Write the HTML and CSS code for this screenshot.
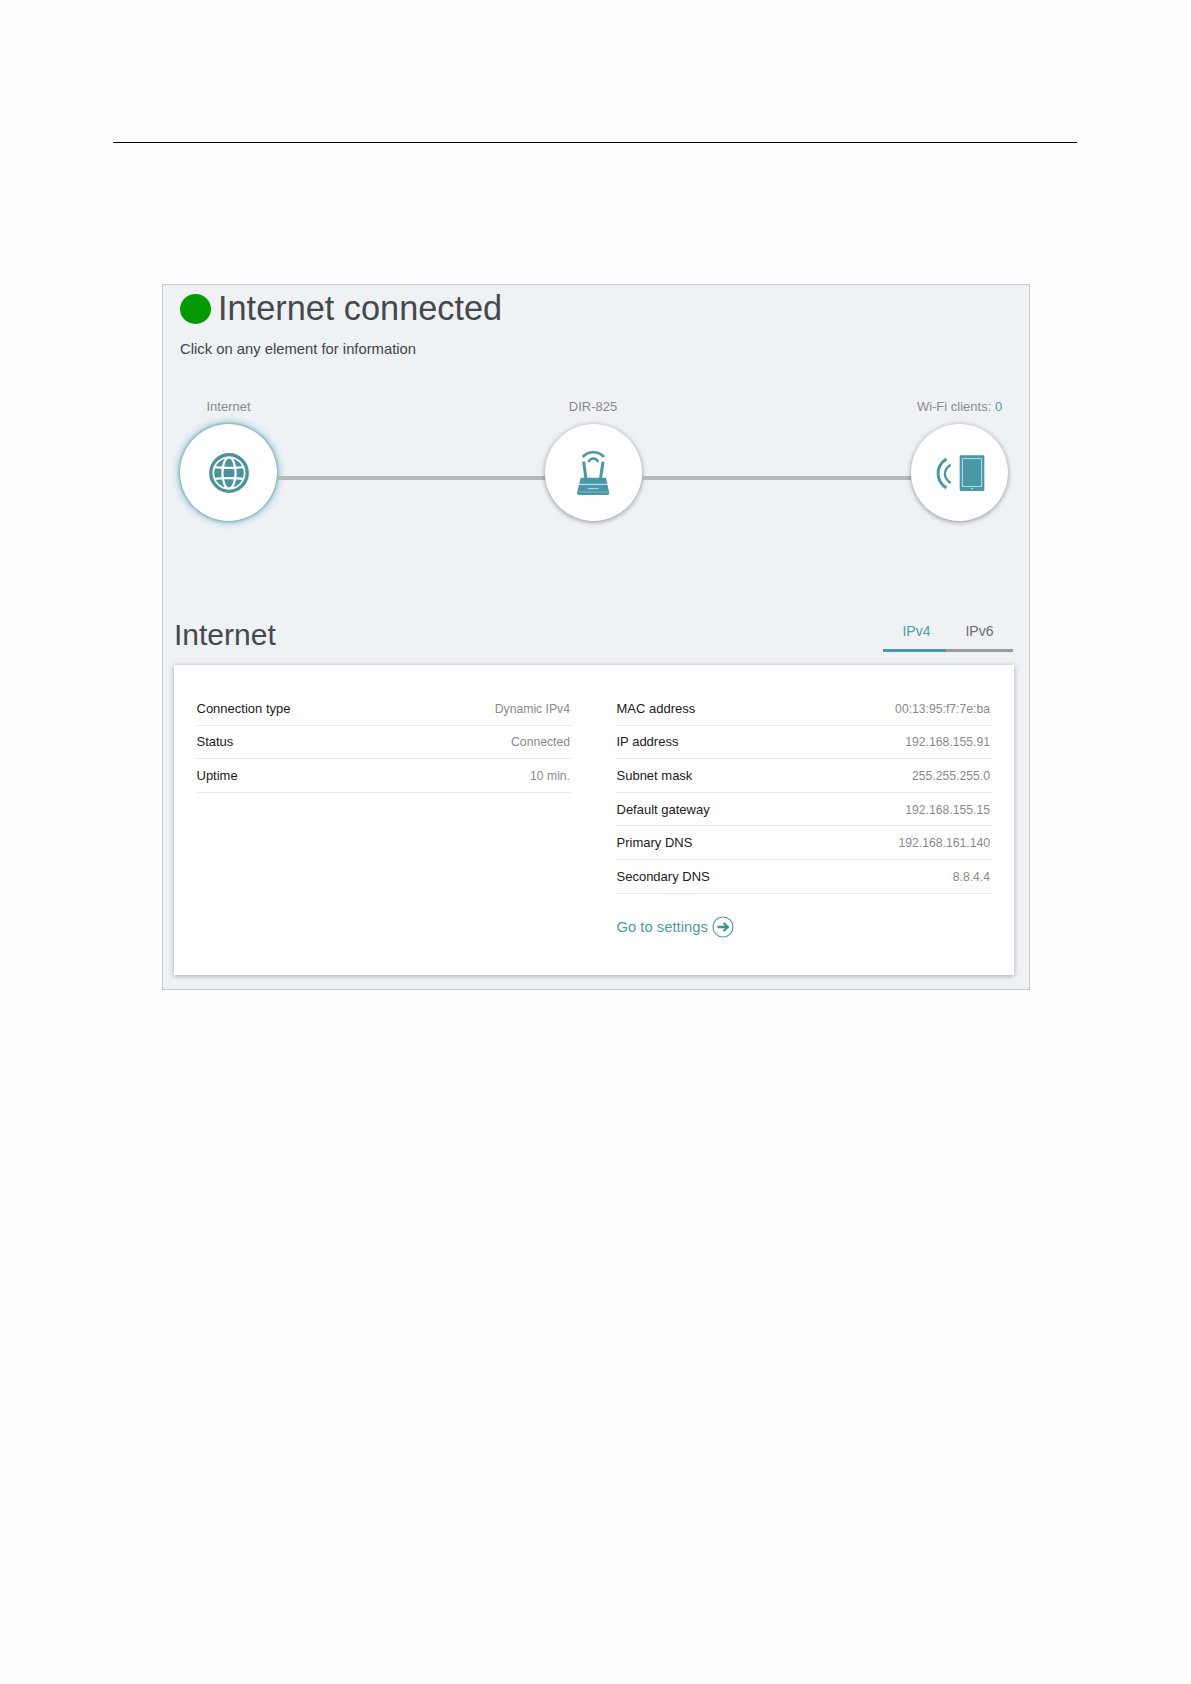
FILE: index.html
```html
<!DOCTYPE html>
<html lang="en">
<head>
<meta charset="utf-8">
<title>Internet connected</title>
<link rel="stylesheet" href="styles.css">
</head>
<body>
<hr class="rule">
<main class="panel">
  <div class="status">
    <span class="dot"></span>
    <h1 class="status-title">Internet connected</h1>
  </div>
  <p class="hint">Click on any element for information</p>
  <div class="diagram">
    <div class="node">
      <div class="node-label">Internet</div>
      <div class="node-circle node-active">
        <svg class="icon" width="40" height="40" viewBox="0 0 40 40">
          <circle cx="20" cy="20" r="18.2" fill="none" stroke="#4a929c" stroke-width="3.4"/>
          <circle cx="20" cy="20" r="14.8" fill="#4a929c"/>
          <g fill="none" stroke="#ffffff" stroke-width="2.2">
            <ellipse cx="20" cy="20" rx="6.6" ry="15.5"/>
            <path d="M6 14.2C11 15 29 15 34 14.2"/>
            <path d="M6 25.8C11 25 29 25 34 25.8"/>
          </g>
        </svg>
      </div>
    </div>
    <div class="link link-first"></div>
    <div class="node">
      <div class="node-label">DIR-825</div>
      <div class="node-circle">
        <svg class="icon icon-router" width="36" height="48" viewBox="105 90 108 144">
          <path d="M128 114C145 95 175 95 192 114" fill="none" stroke="#4a97a8" stroke-width="8"/>
          <path d="M145 129C153 115 167 115 175 129" fill="none" stroke="#4a97a8" stroke-width="7"/>
          <path d="M131 128L138 182M189 128L181 182" fill="none" stroke="#4a97a8" stroke-width="9"/>
          <path d="M122 176H198L208 222Q208 228 202 228H117Q111 228 111 222Z" fill="#4a97a8"/>
          <path d="M116 196H204" stroke="#ffffff" stroke-width="2.5"/>
          <path d="M145 209H176" stroke="#ffffff" stroke-width="3" stroke-dasharray="4 2"/>
          <path d="M114 219H206" stroke="#ffffff" stroke-width="1.5" opacity=".6"/>
        </svg>
      </div>
    </div>
    <div class="link"></div>
    <div class="node">
      <div class="node-label">Wi-Fi clients: <span class="accent">0</span></div>
      <div class="node-circle">
        <svg class="icon" width="50" height="40" viewBox="88 100 150 120">
          <path d="M122 118C89 140 89 182 122 205" fill="none" stroke="#4a97a8" stroke-width="9"/>
          <path d="M135 135C112 150 112 175 135 190" fill="none" stroke="#4a97a8" stroke-width="7"/>
          <rect x="162" y="107" width="74" height="107" rx="4" fill="#4a97a8"/>
          <rect x="170" y="117" width="58" height="83" fill="none" stroke="#d8ecf0" stroke-width="2.5"/>
          <circle cx="199" cy="207" r="2.4" fill="#d8ecf0"/>
        </svg>
      </div>
    </div>
  </div>
  <div class="section-head">
    <h2 class="section-title">Internet</h2>
    <div class="tabs">
      <div class="tab tab-active">IPv4</div>
      <div class="tab">IPv6</div>
    </div>
  </div>
  <section class="card">
    <div class="col">
      <div class="row"><span class="key">Connection type</span><span class="val">Dynamic IPv4</span></div>
      <div class="row"><span class="key">Status</span><span class="val">Connected</span></div>
      <div class="row"><span class="key">Uptime</span><span class="val">10 min.</span></div>
    </div>
    <div class="col">
      <div class="row"><span class="key">MAC address</span><span class="val">00:13:95:f7:7e:ba</span></div>
      <div class="row"><span class="key">IP address</span><span class="val">192.168.155.91</span></div>
      <div class="row"><span class="key">Subnet mask</span><span class="val">255.255.255.0</span></div>
      <div class="row"><span class="key">Default gateway</span><span class="val">192.168.155.15</span></div>
      <div class="row"><span class="key">Primary DNS</span><span class="val">192.168.161.140</span></div>
      <div class="row"><span class="key">Secondary DNS</span><span class="val">8.8.4.4</span></div>
      <a class="settings" href="#">Go to settings
        <svg width="22" height="22" viewBox="0 0 22 22">
          <circle cx="11" cy="11" r="10" fill="none" stroke="#4f9aa5" stroke-width="1.1"/>
          <path d="M5.5 11H15M11.5 7L15.8 11L11.5 15" fill="none" stroke="#3f8f9c" stroke-width="2.3"/>
        </svg>
      </a>
    </div>
  </section>
</main>
</body>
</html>
```

FILE: styles.css
```css
* { box-sizing: border-box; }

html, body {
  margin: 0;
  padding: 0;
  background: #fefefe;
}

body {
  font-family: "Liberation Sans", Arial, sans-serif;
  min-height: 1684px;
}

.rule {
  display: block;
  width: 964px;
  height: 1px;
  margin: 142px 0 0 113px;
  border: 0;
  background: #000000;
}

.panel {
  width: 868px;
  height: 706px;
  margin: 141px 0 0 162px;
  padding: 9px 15px 0 11px;
  background: #eef2f5;
  border: 1px solid #c9c9c9;
}

.status {
  display: flex;
  align-items: center;
  gap: 7px;
  height: 30px;
  margin-left: 6px;
}

.dot {
  width: 31px;
  height: 30px;
  border-radius: 50%;
  background: #049a04;
}

.status-title {
  margin: -2px 0 0;
  font-size: 34.3px;
  font-weight: 400;
  line-height: 30px;
  color: #45494d;
}

.hint {
  margin: 16px 0 0 6px;
  font-size: 14.8px;
  line-height: 18px;
  color: #444444;
}

.diagram {
  display: flex;
  align-items: flex-end;
  margin: 40px 6px 0 6px;
}

.node {
  flex: none;
  width: 97px;
}

.node-label {
  margin-bottom: 8px;
  font-size: 13px;
  line-height: 18px;
  color: #8a8a8a;
  text-align: center;
  white-space: nowrap;
}

.accent { color: #4f9aa5; }

.node-circle {
  display: flex;
  align-items: center;
  justify-content: center;
  width: 97px;
  height: 97px;
  border-radius: 50%;
  background: #ffffff;
  box-shadow: 0 1px 5px rgba(0, 0, 0, .4);
}

.node-active {
  box-shadow: 0 0 3px #4a97a8, 0 0 9px rgba(74, 151, 168, .85);
}

.link {
  flex: 1;
  height: 4px;
  margin-bottom: 41px;
  background: #b6b9bb;
}

.link-first {
  flex: none;
  width: 267.5px;
}

.section-head {
  display: flex;
  align-items: flex-end;
  justify-content: space-between;
  height: 37px;
  margin-top: 95px;
  padding-right: 1px;
}

.section-title {
  margin: 0;
  font-size: 30px;
  font-weight: 400;
  line-height: 36px;
  color: #45494d;
}

.tabs {
  display: flex;
  margin-bottom: 1px;
}

.tab {
  width: 67px;
  height: 36px;
  padding-top: 6px;
  font-size: 14px;
  line-height: 18px;
  color: #6b6b6b;
  text-align: center;
  border-bottom: 3px solid #9a9a9a;
}

.tab-active {
  width: 63px;
  padding-left: 4px;
  color: #4f9aa5;
  border-bottom-color: #4a97a8;
}

.card {
  display: grid;
  grid-template-columns: 375px 375px;
  column-gap: 45px;
  width: 840px;
  height: 310px;
  margin-top: 12px;
  padding: 27px 0 0 22.5px;
  background: #ffffff;
  box-shadow: 0 1px 5px rgba(0, 0, 0, .3);
}

.row {
  display: flex;
  align-items: center;
  justify-content: space-between;
  height: 33.6px;
  padding-right: 1.5px;
  border-bottom: 1px solid #e8e8e8;
}

.key {
  font-size: 13px;
  color: #1a1a1a;
}

.val {
  margin-top: 1px;
  font-size: 12.2px;
  color: #8a8a8a;
}

.settings {
  display: inline-flex;
  align-items: center;
  gap: 4px;
  margin-top: 22px;
  font-size: 14.8px;
  color: #4f9aa5;
  text-decoration: none;
}
```
